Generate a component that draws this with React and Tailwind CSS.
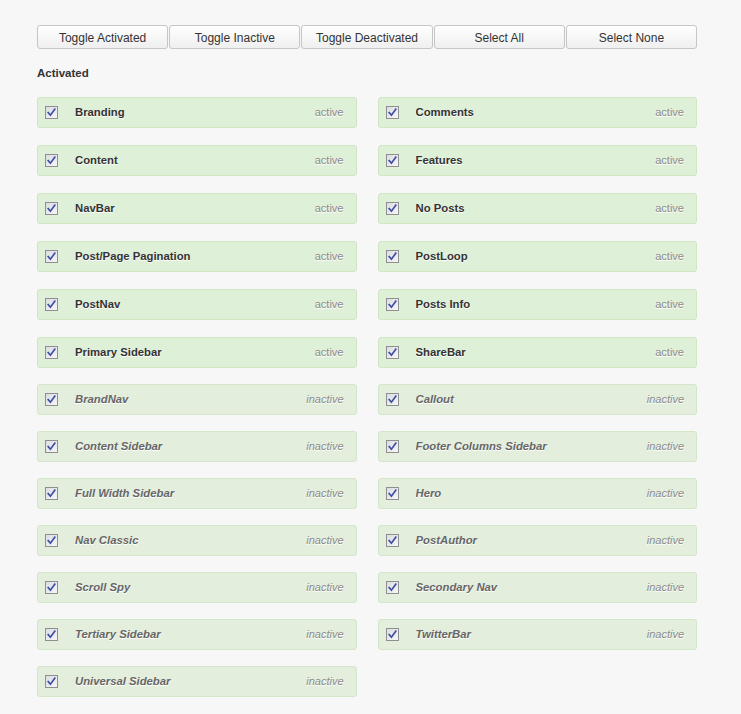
import React from "react";

const buttons = [
  "Toggle Activated",
  "Toggle Inactive",
  "Toggle Deactivated",
  "Select All",
  "Select None",
];

const activeItems = [
  "Branding",
  "Comments",
  "Content",
  "Features",
  "NavBar",
  "No Posts",
  "Post/Page Pagination",
  "PostLoop",
  "PostNav",
  "Posts Info",
  "Primary Sidebar",
  "ShareBar",
];

const inactiveItems = [
  "BrandNav",
  "Callout",
  "Content Sidebar",
  "Footer Columns Sidebar",
  "Full Width Sidebar",
  "Hero",
  "Nav Classic",
  "PostAuthor",
  "Scroll Spy",
  "Secondary Nav",
  "Tertiary Sidebar",
  "TwitterBar",
  "Universal Sidebar",
];

const CheckBox = () => (
  <span className="w-[13px] h-[13px] flex-shrink-0 border border-[#8e8f8f] bg-gradient-to-br from-[#dcdde2] to-[#f6f6f8] flex items-center justify-center">
    <svg width="9" height="9" viewBox="0 0 9 9">
      <path
        d="M1.2 4.6 L3.4 7.2 L7.8 1.2"
        fill="none"
        stroke="#3e4fa3"
        strokeWidth="1.7"
        strokeLinecap="square"
      />
    </svg>
  </span>
);

const ModuleCard = ({ name, active }) => (
  <div
    className={`h-[31px] flex items-center pl-[7px] pr-[12px] rounded-[3px] border ${
      active
        ? "mt-[17px] bg-[#dff0d8] border-[#cfe6c3]"
        : "mt-[16px] bg-[#e3eedd] border-[#d3e6ca]"
    }`}
  >
    <CheckBox />
    {/* label sits 17px after the box */}
    <span
      className={`ml-[17px] flex-grow truncate text-[11.3px] font-bold [text-shadow:0_1px_0_#fff] ${
        active ? "text-[#333333]" : "italic text-[#666666]"
      }`}
    >
      {name}
    </span>
    <span
      className={`text-[11px] text-[#8a8a8a] [text-shadow:0_1px_0_#fff] ${
        active ? "" : "italic"
      }`}
    >
      {active ? "active" : "inactive"}
    </span>
  </div>
);

export default function App() {
  return (
    <div className="min-h-screen bg-[#f7f7f7] font-['Liberation_Sans',Arial,sans-serif]">
      <div className="w-[660px] ml-[37px] pt-[25px]">
        <div className="grid grid-cols-5 gap-[1px]">
          {buttons.map((b) => (
            <button
              key={b}
              className="h-[24px] pt-[1px] rounded-[3px] border border-[#c6c6c6] bg-gradient-to-b from-[#ffffff] to-[#efefef] text-[12px] text-[#333333] leading-none"
            >
              {b}
            </button>
          ))}
        </div>

        <h3 className="mt-[18px] h-[13px] leading-[13px] text-[11.5px] font-bold text-[#333333]">
          Activated
        </h3>

        <div className="grid grid-cols-2 gap-x-[21px] pb-[17px]">
          {activeItems.map((n) => (
            <ModuleCard key={n} name={n} active />
          ))}
          {inactiveItems.map((n) => (
            <ModuleCard key={n} name={n} active={false} />
          ))}
        </div>
      </div>
    </div>
  );
}
